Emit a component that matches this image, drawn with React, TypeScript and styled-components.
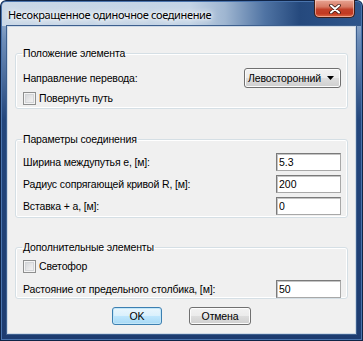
import React from "react";
import styled, { createGlobalStyle, css } from "styled-components";

const Global = createGlobalStyle`
  html, body { margin: 0; padding: 0; background: #ffffff; }
  #root { width: 363px; height: 341px; }
  * { box-sizing: border-box; }
`;

const Window = styled.div`
  width: 363px;
  height: 341px;
  display: flex;
  flex-direction: column;
  border-radius: 6px 6px 0 0;
  overflow: hidden;
  background:
    linear-gradient(to right, #cad8e7 0px, #c3d4e6 190px, #9fb6d1 225px, #4f73a3 265px, #25497d 300px, #2f568c 363px) top / 100% 26px no-repeat,
    linear-gradient(to bottom, #b9cbe0 0px, #6d8db8 40px, #23467c 120px, #1d3c70 341px);
  box-shadow: inset 0 0 0 1px #102446, inset 0 0 0 2px #4a74ad;
  font-family: "Liberation Sans", Arial, sans-serif;
  font-size: 10.5px;
  letter-spacing: -0.15px;
  color: #000;
`;

const TitleBar = styled.div`
  height: 26px;
  display: flex;
  align-items: flex-start;
  padding: 0 8px;
`;

const TitleText = styled.div`
  margin-top: 7px;
  font-family: "Noto Sans", "Open Sans", sans-serif;
  font-size: 11px;
  line-height: 16px;
  color: #000;
  letter-spacing: -0.35px;
  text-shadow: 0 0 6px #ffffff, 0 0 10px #ffffff, 0 0 3px #ffffff;
`;

const CloseButton = styled.div`
  margin-left: auto;
  width: 41px;
  height: 18px;
  border: 1px solid #3d1f1a;
  border-top: none;
  border-radius: 0 0 5px 5px;
  background: linear-gradient(to bottom, #e8a493 0%, #d77a64 40%, #c2412a 55%, #c23a22 80%, #dd6a45 100%);
  box-shadow: inset 0 0 0 1px rgba(255, 220, 210, 0.55);
  display: flex;
  align-items: center;
  justify-content: center;
`;

const Client = styled.div`
  flex: 1;
  margin: 0 7px 7px 7px;
  border: 1px solid #cfdae6;
  box-shadow: 0 0 0 1px #3d5f8e;
  background: #f0f0f0;
  display: flex;
  flex-direction: column;
  padding: 20px 7px 0 7px;
`;

const Group = styled.fieldset<{ $mt?: number; $pt: number; $pb: number }>`
  margin: ${(p) => p.$mt ?? 0}px 0 0 0;
  padding: ${(p) => p.$pt}px 6px ${(p) => p.$pb}px 7px;
  border: 1px solid #d5dfe5;
  border-radius: 3px;
  box-shadow: inset 0 0 0 1px #ffffff;
  display: flex;
  flex-direction: column;
  min-width: 0;
`;

const Legend = styled.legend`
  padding: 0 1px;
  margin-left: -1px;
  line-height: 13px;
  height: 13px;
  color: #000;
`;

const Row = styled.div<{ $h: number; $mt?: number }>`
  height: ${(p) => p.$h}px;
  margin-top: ${(p) => p.$mt ?? 0}px;
  display: flex;
  align-items: center;
  justify-content: space-between;
`;

const Label = styled.span`
  line-height: 13px;
  white-space: nowrap;
`;

const ComboBox = styled.div`
  width: 97px;
  height: 20px;
  border: 1px solid #707070;
  border-radius: 3px;
  background: linear-gradient(to bottom, #f2f2f2 0%, #ebebeb 50%, #dddddd 51%, #cfcfcf 100%);
  box-shadow: inset 0 0 0 1px #fcfcfc;
  display: flex;
  align-items: center;
  padding: 0 6px 0 3px;
`;

const ComboText = styled.span`
  flex: 1;
  line-height: 13px;
  white-space: nowrap;
`;

const TextBox = styled.input`
  width: 65px;
  height: 18px;
  border: 1px solid #7a7a7a;
  border-right-color: #a8a8a8;
  border-bottom-color: #a8a8a8;
  box-shadow: inset 1px 1px 0 #c4c4c4;
  background: #ffffff;
  padding: 0 2px;
  margin: 0;
  font-family: "Liberation Sans", Arial, sans-serif;
  font-size: 10.5px;
  color: #000;
  outline: none;
`;

const CheckRow = styled.label<{ $mt?: number }>`
  height: 13px;
  margin-top: ${(p) => p.$mt ?? 0}px;
  display: flex;
  align-items: center;
  gap: 3px;
`;

const CheckBox = styled.span`
  width: 13px;
  height: 13px;
  flex: none;
  border: 1px solid #8e8f8f;
  background: linear-gradient(135deg, #cfd1d4 0%, #eaeaeb 60%, #f6f6f6 100%);
  box-shadow: inset 0 0 0 1px #f4f4f4, inset 0 0 0 2px #d3d5d8;
`;

const ButtonRow = styled.div`
  margin-top: 8px;
  display: flex;
  justify-content: center;
  gap: 27px;
`;

const Button = styled.div<{ $w: number; $default?: boolean }>`
  width: ${(p) => p.$w}px;
  height: 18px;
  border: 1px solid #707070;
  border-radius: 3px;
  background: linear-gradient(to bottom, #f2f2f2 0%, #ebebeb 50%, #dddddd 51%, #cfcfcf 100%);
  box-shadow: inset 0 0 0 1px #fcfcfc;
  display: flex;
  align-items: center;
  justify-content: center;
  line-height: 13px;
  ${(p) =>
    p.$default &&
    css`
      border-color: #3c7fb1;
      background: linear-gradient(to bottom, #eaf6fd 0%, #d9f0fc 50%, #bee6fd 51%, #a7d9f5 100%);
      box-shadow: inset 0 0 0 1px #c2e6f8;
    `}
`;

export default function App() {
  return (
    <>
      <Global />
      <Window>
        <TitleBar>
          <TitleText>Несокращенное одиночное соединение</TitleText>
          <CloseButton>
            <svg width="12" height="10" viewBox="0 0 12 10">
              <path d="M2 1.5 L10 8.5 M10 1.5 L2 8.5" stroke="#3a1a14" strokeWidth="3.6" strokeLinecap="round" />
              <path d="M2 1.5 L10 8.5 M10 1.5 L2 8.5" stroke="#ffffff" strokeWidth="2" strokeLinecap="round" />
            </svg>
          </CloseButton>
        </TitleBar>
        <Client>
          <Group $pt={8} $pb={3}>
            <Legend>Положение элемента</Legend>
            <Row $h={20}>
              <Label>Направление перевода:</Label>
              <ComboBox>
                <ComboText>Левосторонний</ComboText>
                <svg width="7" height="4" viewBox="0 0 7 4">
                  <path d="M0 0 H7 L3.5 4 Z" fill="#000" />
                </svg>
              </ComboBox>
            </Row>
            <CheckRow $mt={4}>
              <CheckBox />
              <Label>Повернуть путь</Label>
            </CheckRow>
          </Group>

          <Group $mt={24} $pt={7} $pb={2}>
            <Legend>Параметры соединения</Legend>
            <Row $h={18}>
              <Label>Ширина междупутья е, [м]:</Label>
              <TextBox defaultValue="5.3" />
            </Row>
            <Row $h={18} $mt={4}>
              <Label>Радиус сопрягающей кривой R, [м]:</Label>
              <TextBox defaultValue="200" />
            </Row>
            <Row $h={18} $mt={4}>
              <Label>Вставка + a, [м]:</Label>
              <TextBox defaultValue="0" />
            </Row>
          </Group>

          <Group $mt={23} $pt={6} $pb={0}>
            <Legend>Дополнительные элементы</Legend>
            <CheckRow>
              <CheckBox />
              <Label>Светофор</Label>
            </CheckRow>
            <Row $h={18} $mt={7}>
              <Label>Растояние от предельного столбика, [м]:</Label>
              <TextBox defaultValue="50" />
            </Row>
          </Group>

          <ButtonRow>
            <Button $w={50} $default>OK</Button>
            <Button $w={62}>Отмена</Button>
          </ButtonRow>
        </Client>
      </Window>
    </>
  );
}
